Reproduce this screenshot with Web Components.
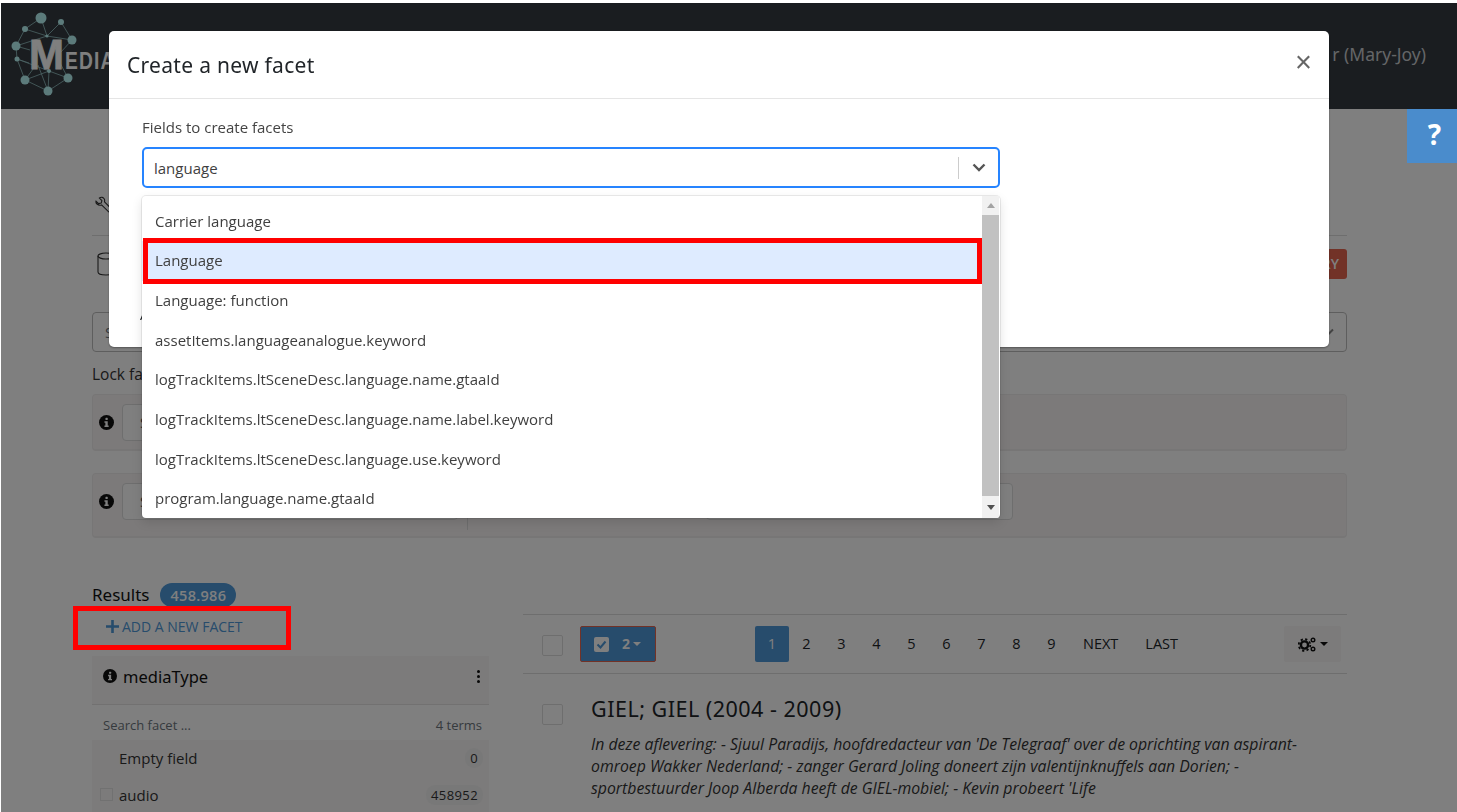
<!DOCTYPE html>
<html>
<head>
<meta charset="utf-8">
<title>Create a new facet</title>
<style>
    html { background: #fff; height: 100%; overflow: hidden; }
    body { margin: 3px 0 0 1px; height: 809px; overflow: hidden; font: 15px/22px "Open Sans", sans-serif; color: #212529; }
</style>
</head>
<body>
<media-navbar user="r (Mary-Joy)"></media-navbar>
<media-page></media-page>
<facet-modal></facet-modal>
<red-marker></red-marker>
<help-tab></help-tab>

<script>
(function () {
    const infoIcon = (size) => `<svg width="${size}" height="${size}" viewBox="0 0 16 16" style="display:block;flex:none">
        <circle cx="8" cy="8" r="8" fill="#111"/>
        <rect x="6.9" y="3" width="2.4" height="2.4" rx=".6" fill="#fff"/>
        <path d="M5.8 6.7h3.5v4.6h1v1.5H5.8v-1.5h1V8.2h-1z" fill="#fff"/>
    </svg>`;

    // small helper, every element here is just a style + markup in an open shadow root
    function define (name, html) {
        const template = document.createElement('template');
        template.innerHTML = html;
        customElements.define(name, class extends HTMLElement {
            constructor () {
                super();
                this.attachShadow({mode: 'open'});
                this.shadowRoot.appendChild(template.content.cloneNode(true));
            }
        });
    }

    class MediaNavbar extends HTMLElement {
        constructor () {
            super();
            this.attachShadow({mode: 'open'});
            this.shadowRoot.innerHTML = `
            <style>
                :host { display: flex; align-items: center; justify-content: space-between; position: relative;
                    height: 106px; background: #343a40; padding: 0 31px 4px 0; box-sizing: border-box; }
                svg { position: absolute; left: -1px; top: 0; }
                #brand { position: relative; margin: 0 0 0 28px; display: flex; align-items: baseline; color: #fff;
                    font-family: "Liberation Sans", sans-serif; font-weight: 700; line-height: 40px; padding-top: 7px; }
                #m { font-size: 42px; -webkit-text-stroke: .8px #fff; }
                #edia { font-size: 24px; display: inline-block; transform: scaleX(.8); transform-origin: left; letter-spacing: 1.5px; margin-left: 1px; }
                #user { color: #c9cccf; font: 400 17.5px "Noto Sans", sans-serif; }
            </style>
            <svg width="110" height="100" viewBox="0 0 110 100" fill="#b9f6f6" stroke="#b9f6f6">
                <g stroke-width=".8" fill="none" opacity=".75">
                    <path d="M41 15L47 33L61 19M41 15L25 26L47 33L72 37L61 19M25 26L16 43L47 33M16 43L17 56L29 60M16 43L30 47"/>
                    <path d="M72 37L60 50M17 56L25 77L49 68L68 75L48 88L49 68M25 77L48 88M17 56L49 68M68 75L60 60M25 77L36 62M48 88L38 62"/>
                </g>
                <g stroke="none">
                    <circle cx="41" cy="15" r="5.5"/><circle cx="61" cy="19" r="3"/><circle cx="25" cy="26" r="3"/>
                    <circle cx="72" cy="37" r="4.5"/><circle cx="16" cy="43" r="4.5"/><circle cx="17" cy="56" r="2.5"/>
                    <circle cx="25" cy="77" r="4.5"/><circle cx="68" cy="75" r="4.5"/><circle cx="48" cy="88" r="4.5"/>
                    <circle cx="47" cy="33" r="1.6"/><circle cx="49" cy="68" r="2"/>
                </g>
            </svg>
            <div id="brand"><span id="m">M</span><span id="edia">EDIA</span></div>
            <div id="user"></div>`;
        }
        connectedCallback () {
            this.shadowRoot.getElementById('user').textContent = this.getAttribute('user');
        }
    }
    customElements.define('media-navbar', MediaNavbar);

    define('lock-box', `
    <style>
        :host { display: flex; align-items: flex-start; gap: 8px; box-sizing: border-box; background: #f8f5f5;
            border: 1px solid #efecec; border-bottom-width: 2px; border-radius: 4px; padding: 9px 0 0 6px; margin-bottom: 22px; }
        .input { box-sizing: border-box; height: 37px; border: 1px solid #dcdcdc; border-radius: 4px; background: #fff;
            padding: 6px 0 0 17px; font-size: 15px; color: #495057; }
        .icon { margin-top: 11px; }
        .first { width: 336px; }
    </style>
    <span class="icon">${infoIcon(15)}</span>
    <div class="input first">S</div>
    <slot></slot>`);

    define('media-page', `
    <style>
        :host { display: block; padding: 0 0 0 91px; width: 1255px; }
        #tools { height: 127px; box-sizing: border-box; padding-top: 87px; border-bottom: 1px solid #dcdcdc; padding-left: 3px; }
        #tools svg { display: block; }
        #query { display: flex; align-items: center; justify-content: space-between; margin-top: 13px; height: 30px; padding-left: 5px; }
        #query svg { display: block; }
        #apply { background: #e4644e; color: #fff; border-radius: 3px; height: 30px; line-height: 30px; padding: 0 8px;
            font-size: 14px; font-weight: 600; }
        #choose { box-sizing: border-box; height: 40px; margin-top: 33px; border: 1px solid #bdbdbd; border-radius: 4px; padding: 8px 12px; color: #6c757d;
            display: flex; justify-content: space-between; align-items: center; }
        #lock { margin: 11px 0 9px; font-size: 15.5px; color: #333; }
        #box1 { height: 57px; }
        #box2 { height: 65px; }
        #columns { display: grid; grid-template-columns: 397px 824px; column-gap: 34px; margin-top: 45px; }
        #head { display: flex; align-items: center; gap: 11px; height: 24px; font: 17px "Noto Sans", sans-serif; color: #111; }
        #head > span:first-child { margin-top: -2px; }
        #badge { background: #4e98d8; color: #fff; border-radius: 12px; height: 24px; line-height: 25px; padding: 0 10px; font: 600 14.5px/25px "Open Sans", sans-serif; letter-spacing: .3px; }
        #add { display: flex; align-items: center; gap: 3px; height: 49px; box-sizing: border-box; padding-bottom: 10px; margin-left: 14px; color: #4e98d8; font-size: 14px; }
        #right { padding-top: 31px; }
    </style>
    <div id="tools">
        <svg width="17" height="18" viewBox="0 0 17 18" fill="none" stroke="#333" stroke-width="1.1">
            <path d="M1 5.2l2.6 2.4 2.6-.5.7-2.5L4.4 2C6.2.8 8.5 1.2 9.3 3c.5 1 .4 2 .2 2.8l6.6 6.7c.9 1 .7 2.2 0 2.9-.8.7-2 .8-2.9-.1L6.6 8.9C5 9.6 3.3 9.2 2 8 1 7.2.8 6.2 1 5.2z"/>
        </svg>
    </div>
    <div id="query">
        <svg width="16" height="24" viewBox="0 0 16 24" fill="none" stroke="#333" stroke-width="1.1">
            <ellipse cx="9" cy="4" rx="8" ry="3"/><path d="M1 4v16c0 1.7 3.5 3 8 3s7-1 7-1"/>
        </svg>
        <div id="apply">QUERY</div>
    </div>
    <div id="choose"><span>S</span>
        <svg width="12" height="8" viewBox="0 0 12 8" fill="none" stroke="#888" stroke-width="2"><path d="M1 1.5l5 5 5-5"/></svg>
    </div>
    <div id="lock">Lock fa</div>
    <lock-box id="box1"></lock-box>
    <lock-box id="box2"><div style="width:1px;height:47px;background:#dcdcdc;margin-left:1px"></div>
        <div style="box-sizing:border-box;width:307px;height:37px;margin-left:230px;border:1px solid #dcdcdc;border-radius:4px;background:#fff"></div></lock-box>
    <div id="columns">
        <div>
            <div id="head"><span>Results</span><span id="badge">458.986</span></div>
            <div id="add">
                <svg width="13" height="13" viewBox="0 0 13 13" fill="#4e98d8"><path d="M5.2 0h2.600v5.200H13v2.600H7.800V13H5.200V7.800H0V5.200h5.200z"/></svg>
                <span>ADD A NEW FACET</span>
            </div>
            <facet-card></facet-card>
        </div>
        <div id="right">
            <pager-bar></pager-bar>
            <search-result></search-result>
        </div>
    </div>`);

    class FacetCard extends HTMLElement {
        constructor () {
            super();
            this.attachShadow({mode: 'open'});
            const terms = [['', 'Empty field', '0'], ['box', 'audio', '458952']];
            this.shadowRoot.innerHTML = `
            <style>
                :host { display: block; background: #f8f6f6; height: 156px; overflow: hidden; }
                #title { display: flex; align-items: center; gap: 6px; height: 49px; box-sizing: border-box; padding: 0 6px 8px 11px; border-bottom: 1px solid #e4e2e2;
                    font: 400 16.5px "Noto Sans", sans-serif; color: #111; }
                #title b { flex: 1; font-weight: 400; }
                #dots { display: grid; gap: 2px; padding: 0 3px; }
                #dots i { width: 3px; height: 3px; border-radius: 50%; background: #111; display: block; }
                #search { display: flex; justify-content: space-between; align-items: center; height: 35px; box-sizing: border-box; padding: 5px 7px 0 11px; font-size: 13px; color: #6c757d; background: #fff; }
                .term { display: flex; align-items: center; height: 36.5px; padding: 0 6px 0 8px; color: #333; }
                .box { width: 13px; height: 13px; box-sizing: border-box; border: 1px solid #e2e2e2; margin-right: 6px; flex: none; }
                .none { width: 13px; margin-right: 6px; flex: none; }
                .name { flex: 1; }
                .count { font-size: 13px; letter-spacing: .4px; background: #f1f1f1; border-radius: 9px; padding: 0 5px; line-height: 20px; }
            </style>
            <div id="title">${infoIcon(14)}<b>mediaType</b><div id="dots"><i></i><i></i><i></i></div></div>
            <div id="search"><span>Search facet ...</span><span>4 terms</span></div>
            ${terms.map(t => `<div class="term"><span class="${t[0] ? 'box' : 'none'}"></span><span class="name">${t[1]}</span><span class="count">${t[2]}</span></div>`).join('')}`;
        }
    }
    customElements.define('facet-card', FacetCard);

    class PagerBar extends HTMLElement {
        constructor () {
            super();
            this.attachShadow({mode: 'open'});
            const pages = ['1', '2', '3', '4', '5', '6', '7', '8', '9'];
            this.shadowRoot.innerHTML = `
            <style>
                :host { display: flex; align-items: center; height: 58px; border-top: 1px solid #dcdcdc; border-bottom: 1px solid #dcdcdc; color: #212529; }
                #check { width: 21px; height: 21px; box-sizing: border-box; border: 1px solid #ddd; border-radius: 2px; margin: 3px 0 0 19px; background: #fff; }
                #selected { display: flex; align-items: center; box-sizing: border-box; width: 76px; height: 36px; margin-left: 17px; background: #4e98d8;
                    border: 1px solid #e4644e; border-radius: 2px; color: #fff; font-weight: 700; font-size: 14px; padding-left: 13px; gap: 13px; }
                #tick { width: 15px; height: 15px; background: #fff; border-radius: 2px; display: block; }
                #selected u { width: 0; height: 0; border: 4px solid transparent; border-top-color: currentColor; border-bottom: 0; margin-left: -10px; }
                #pages { display: flex; margin-left: 99px; font-size: 14.5px; }
                .p { width: 35px; height: 36px; line-height: 36px; text-align: center; }
                .p.on { width: 34px; background: #4e98d8; color: #fff; border-radius: 2px; }
                .w { padding-left: 14px; line-height: 36px; }
                .w + .w { padding-left: 27px; }
                #gear { display: flex; align-items: center; gap: 3px; box-sizing: border-box; width: 57px; height: 36px; margin: 0 6px 0 auto; background: #f8f6f6; padding-left: 14px; border-radius: 2px; }
                #gear u { width: 0; height: 0; border: 4.5px solid transparent; border-top-color: #111; border-bottom: 0; margin-left: 1px; }
                svg { display: block; }
            </style>
            <div id="check"></div>
            <div id="selected">
                <svg id="tick" viewBox="0 0 15 15"><path d="M3.5 7.5l3 3 5-6" fill="none" stroke="#4e98d8" stroke-width="2"/></svg>
                <span>2</span><u></u>
            </div>
            <div id="pages">
                ${pages.map((n, i) => `<div class="p${i == 0 ? ' on' : ''}">${n}</div>`).join('')}
                <div class="w">NEXT</div><div class="w">LAST</div>
            </div>
            <div id="gear">
                <svg width="18" height="15" viewBox="0 0 18 15">
                    <circle cx="6.5" cy="8" r="3.6" fill="none" stroke="#111" stroke-width="2.4"/>
                    <circle cx="6.5" cy="8" r="5.8" fill="none" stroke="#111" stroke-width="1.8" stroke-dasharray="2.2 2.35"/>
                    <circle cx="15" cy="3" r="1.8" fill="none" stroke="#111" stroke-width="1.4"/>
                    <circle cx="15" cy="12" r="1.8" fill="none" stroke="#111" stroke-width="1.4"/>
                </svg><u></u>
            </div>`;
        }
    }
    customElements.define('pager-bar', PagerBar);

    define('search-result', `
    <style>
        :host { display: flex; padding: 30px 0 0 19px; }
        #check { width: 21px; height: 21px; box-sizing: border-box; border: 1px solid #ddd; border-radius: 2px; background: #fff; margin-right: 28px; flex: none; }
        h3 { margin: -8px 0 0; font: 400 21.5px/26px "Noto Sans", sans-serif; letter-spacing: .5px; color: #212529; }
        p { margin: 11px 0 0; font-style: italic; font-size: 15.8px; line-height: 22px; color: #333; width: 725px; }
    </style>
    <div id="check"></div>
    <div>
        <h3>GIEL; GIEL (2004 - 2009)</h3>
        <p>In deze aflevering: - Sjuul Paradijs, hoofdredacteur van 'De Telegraaf' over de oprichting van aspirant-omroep Wakker Nederland; - zanger Gerard Joling doneert zijn valentijnknuffels aan Dorien; - sportbestuurder Joop Alberda heeft de GIEL-mobiel; - Kevin probeert 'Life</p>
    </div>`);

    class FieldSelect extends HTMLElement {
        constructor () {
            super();
            this.attachShadow({mode: 'open'});
            const options = ['Carrier language', 'Language', 'Language: function', 'assetItems.languageanalogue.keyword',
                'logTrackItems.ltSceneDesc.language.name.gtaaId', 'logTrackItems.ltSceneDesc.language.name.label.keyword',
                'logTrackItems.ltSceneDesc.language.use.keyword', 'program.language.name.gtaaId'];
            this.shadowRoot.innerHTML = `
            <style>
                :host { display: block; position: relative; width: 858px; }
                #control { display: flex; align-items: center; box-sizing: border-box; height: 41px; border: 2px solid #2684ff; border-radius: 5px; background: #fff; padding-left: 10px; color: #3f3f3f; }
                #value { flex: 1; }
                #sep { width: 1px; height: 22px; background: #ccc; }
                #arrow { width: 39px; display: flex; justify-content: center; }
                #menu { position: absolute; left: 0; right: 0; top: 49px; height: 322px; display: flex; background: #fff; border-radius: 4px;
                    box-shadow: 0 0 0 1px rgba(0,0,0,.08), 0 4px 11px rgba(0,0,0,.12); overflow: hidden; }
                #list { flex: 1; padding-top: 5.5px; }
                .o { position: relative; height: 39.7px; line-height: 39.7px; padding-left: 13px; color: #3f3f3f; }
                .o.on { background: #deebff; }
                .o.on::after { content: ""; position: absolute; inset: -3.5px 0 -3px 1px; border: 5px solid #f00; pointer-events: none; }
                #bar { width: 17px; margin-right: 1px; background: #f1f1f1; display: flex; flex-direction: column; align-items: center; }
                #bar i { width: 0; height: 0; border-style: solid; border-color: transparent; border-width: 0 4.5px; }
                #up { border-bottom: 5px solid #a3a3a3 !important; margin: 7px 0; }
                #thumb { width: 17px; flex: 1; background: #c1c1c1; }
                #down { border-top: 5px solid #505050 !important; margin: 9px 0 8px; }
            </style>
            <div id="control">
                <div id="value">language</div>
                <div id="sep"></div>
                <div id="arrow"><svg width="14" height="9" viewBox="0 0 14 9" fill="none" stroke="#555" stroke-width="2.4"><path d="M1.5 1.5L7 7l5.5-5.5"/></svg></div>
            </div>
            <div id="menu">
                <div id="list">${options.map(o => `<div class="o${o == 'Language' ? ' on' : ''}">${o}</div>`).join('')}</div>
                <div id="bar"><i id="up"></i><div id="thumb"></div><i id="down"></i></div>
            </div>`;
        }
    }
    customElements.define('field-select', FieldSelect);

    define('facet-modal', `
    <style>
        :host { display: block; position: fixed; inset: 3px 0 0 1px; background: rgba(0,0,0,.5); }
        #dialog { box-sizing: border-box; width: 1220px; height: 316px; margin: 28px 0 0 108px; background: #fff; border-radius: 5px; box-shadow: 0 1px 2px rgba(0,0,0,.35); }
        header { display: flex; justify-content: space-between; align-items: center; height: 68px; box-sizing: border-box; border-bottom: 1px solid #e5e5e5; padding: 0 17px 0 18px; }
        h2 { margin: 0; font: 400 21px "Noto Sans", sans-serif; letter-spacing: .3px; color: #212529; }
        #close { font: 400 29px "Liberation Sans", sans-serif; color: #666; margin-top: -5px; }
        #body { padding: 17px 0 0 33px; }
        label { display: block; color: #444; margin-bottom: 9px; font-size: 15px; }
        #extra { margin: 115px 0 0 -2px; }
    </style>
    <div id="dialog">
        <header><h2>Create a new facet</h2><div id="close">×</div></header>
        <div id="body">
            <label>Fields to create facets</label>
            <field-select></field-select>
            <div id="extra">A</div>
        </div>
    </div>`);

    define('red-marker', `
    <style>
        :host { display: block; position: fixed; left: 73px; top: 606px; width: 218px; height: 44px; box-sizing: border-box; border: 5px solid #f00; }
    </style>`);

    define('help-tab', `
    <style>
        :host { display: flex; align-items: center; justify-content: center; position: fixed; left: 1407px; top: 109px; width: 50px; height: 54px; box-sizing: border-box; padding: 0 0 4px 5px;
            background: #4a8ccc; color: #fff; font: 700 28px "Noto Sans", sans-serif; }
    </style>
    ?`);
})();
</script>
</body>
</html>
